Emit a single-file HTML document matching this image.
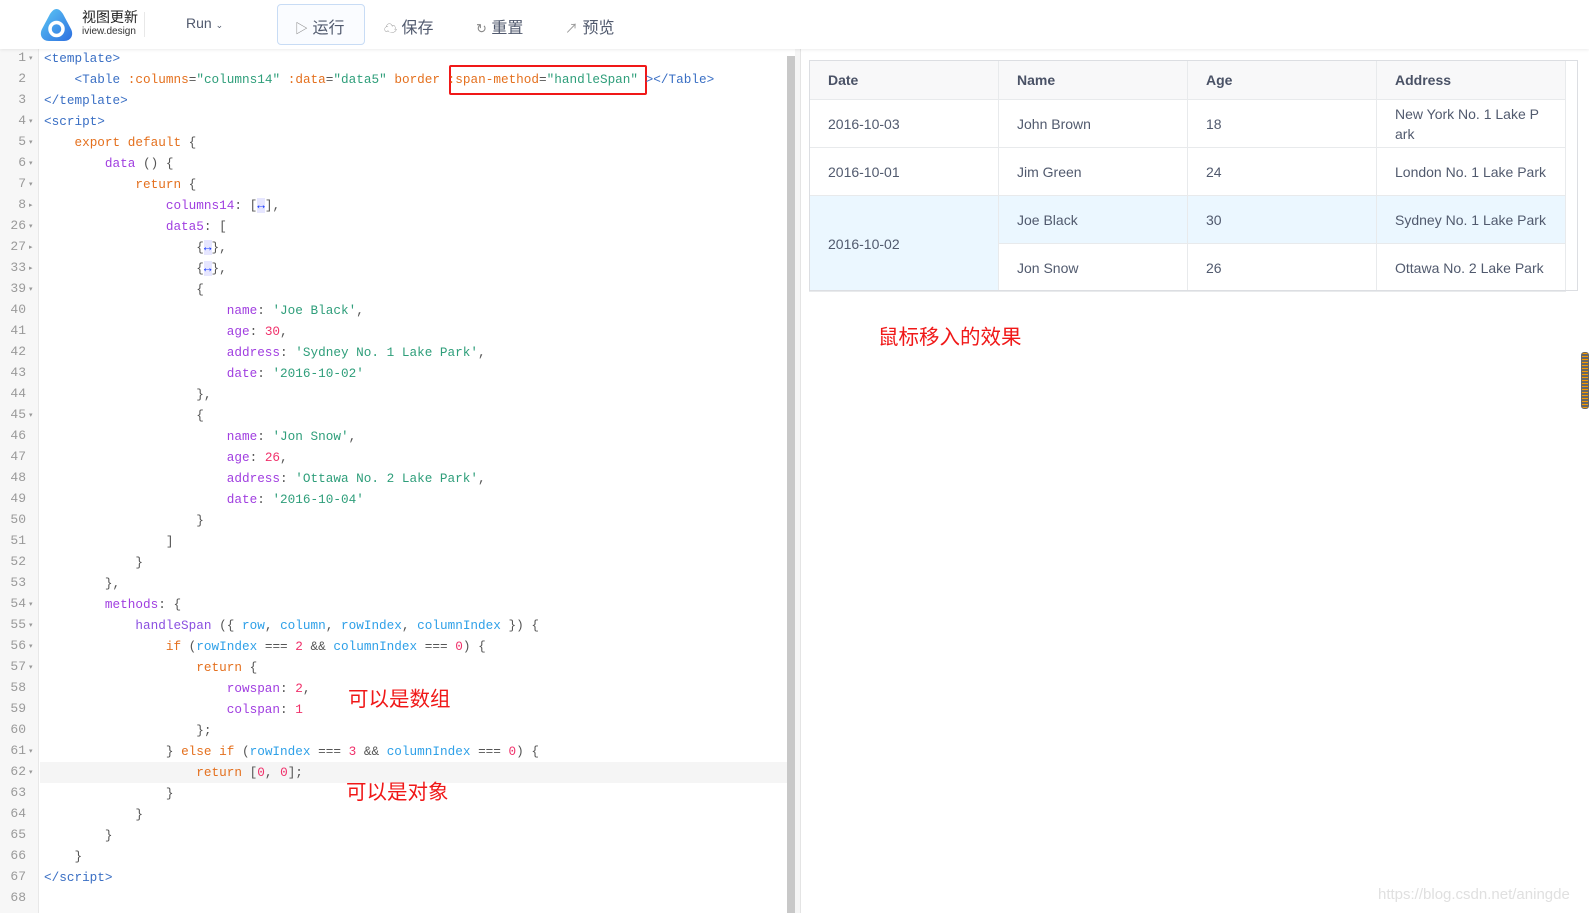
<!DOCTYPE html>
<html><head><meta charset="utf-8"><style>
*{margin:0;padding:0;box-sizing:border-box}
body{width:1589px;height:913px;overflow:hidden;background:#fff;font-family:"Liberation Sans","Noto Sans CJK SC",sans-serif;position:relative}
.top{position:absolute;left:0;top:0;width:1589px;height:49px;background:#fff;box-shadow:0 1px 3px rgba(0,0,0,.08);z-index:2}
.abs{position:absolute}
.btn{position:absolute;top:13px;font-size:16px;color:#515a6e;white-space:nowrap}
.gutter{position:absolute;left:0;top:49px;width:39px;height:864px;background:#f7f7f7;border-right:1px solid #e8e8e8}
.ln{position:absolute;left:0;width:26px;text-align:right;font:13px "Liberation Mono",monospace;color:#9a9a9a}
.ar{position:absolute;left:29px;font-size:7px;color:#999}
.code{position:absolute;left:44px;font:12.7px "Liberation Mono",monospace;color:#555;white-space:pre;line-height:21px}
.t{color:#3a6fc4}.a{color:#e4701e}.s{color:#2e9e7a}.k{color:#e4701e}.p{color:#a03ee0}.n{color:#f0306a}.v{color:#2ea0e8}.f{color:#8a4fe0}
.e{color:#1a3cff;background:#e6e6ff}
table{position:absolute;left:809px;top:60px;border-collapse:collapse;font-size:14px;color:#515a6e;table-layout:fixed;width:756px}
td,th{border:1px solid #e8eaec;width:189px;padding:0 18px;text-align:left;line-height:20px}
th{background:#f8f8f9;height:39px;font-weight:bold;color:#4a5266}
td{height:48px}
.hl{background:#ebf7ff}
.cn{position:absolute;color:#f01818;font-size:20.5px;font-family:"Liberation Sans","Noto Sans CJK SC",sans-serif}
</style></head><body>
<div class="top">
 <svg class="abs" style="left:39px;top:7px" width="35" height="36" viewBox="0 0 35 36"><defs><linearGradient id="lg1" x1="0" y1="0" x2="1" y2="1"><stop offset="0" stop-color="#5cc8f5"/><stop offset="1" stop-color="#2d6fe0"/></linearGradient></defs><path d="M17.5 2C20 2 22 4 24 7L32 22C35 28 32 34 25 34H10C3 34 0 28 3 22L11 7C13 4 15 2 17.5 2Z" fill="url(#lg1)"/><circle cx="17.5" cy="22" r="6.5" fill="none" stroke="#fff" stroke-width="3.5"/></svg>
 <div class="abs" style="left:82px;top:7px;font-size:14px;color:#222">视图更新</div>
 <div class="abs" style="left:82px;top:26px;font-size:10px;color:#333">iview.design</div>
 <div class="abs" style="left:144px;top:12px;width:1px;height:25px;background:#e8e8e8"></div>
 <div class="btn" style="left:186px;top:15px;font-size:14px">Run <span style="font-size:9px">&#8964;</span></div>
 <div class="abs" style="left:277px;top:4px;width:88px;height:41px;border:1px solid #c8dcf5;border-radius:4px;background:#fafcff"></div>
 <div class="btn" style="left:295px;top:14px"><span style="font-size:13px;color:#888">&#9655;</span> 运行</div>
 <div class="btn" style="left:384px;top:14px"><span style="font-size:13px;color:#888">&#9729;</span> 保存</div>
 <div class="btn" style="left:476px;top:14px"><span style="font-size:13px;color:#888">&#8635;</span> 重置</div>
 <div class="btn" style="left:565px;top:14px"><span style="font-size:13px;color:#999">&#8599;</span> 预览</div>
</div>
<div class="gutter"></div>
<div class="abs" style="left:40px;top:762px;width:747px;height:21px;background:#f5f5f5"></div>
<div class="abs" style="left:787px;top:56px;width:8px;height:857px;background:#c8c8c8"></div>
<div class="abs" style="left:795px;top:49px;width:6px;height:864px;background:#f5f5f5;border-right:1px solid #e4e4e4"></div>
<div id="gnums"></div>
<div class="abs" style="left:449px;top:65px;width:198px;height:30px;border:2px solid #f01818;border-radius:2px"></div>
<div class="code" style="top:48px"><span class="t">&lt;template&gt;</span>
    <span class="t">&lt;Table</span> <span class="a">:columns</span>=<span class="s">"columns14"</span> <span class="a">:data</span>=<span class="s">"data5"</span> <span class="a">border</span> <span class="a">:span-method</span>=<span class="s">"handleSpan"</span> <span class="t">&gt;&lt;/Table&gt;</span>
<span class="t">&lt;/template&gt;</span>
<span class="t">&lt;script&gt;</span>
    <span class="k">export default</span> {
        <span class="p">data</span> () {
            <span class="k">return</span> {
                <span class="p">columns14</span>: [<span class="e">&#8596;</span>],
                <span class="p">data5</span>: [
                    {<span class="e">&#8596;</span>},
                    {<span class="e">&#8596;</span>},
                    {
                        <span class="p">name</span>: <span class="s">'Joe Black'</span>,
                        <span class="p">age</span>: <span class="n">30</span>,
                        <span class="p">address</span>: <span class="s">'Sydney No. 1 Lake Park'</span>,
                        <span class="p">date</span>: <span class="s">'2016-10-02'</span>
                    },
                    {
                        <span class="p">name</span>: <span class="s">'Jon Snow'</span>,
                        <span class="p">age</span>: <span class="n">26</span>,
                        <span class="p">address</span>: <span class="s">'Ottawa No. 2 Lake Park'</span>,
                        <span class="p">date</span>: <span class="s">'2016-10-04'</span>
                    }
                ]
            }
        },
        <span class="p">methods</span>: {
            <span class="f">handleSpan</span> ({ <span class="v">row</span>, <span class="v">column</span>, <span class="v">rowIndex</span>, <span class="v">columnIndex</span> }) {
                <span class="k">if</span> (<span class="v">rowIndex</span> === <span class="n">2</span> &amp;&amp; <span class="v">columnIndex</span> === <span class="n">0</span>) {
                    <span class="k">return</span> {
                        <span class="p">rowspan</span>: <span class="n">2</span>,
                        <span class="p">colspan</span>: <span class="n">1</span>
                    };
                } <span class="k">else if</span> (<span class="v">rowIndex</span> === <span class="n">3</span> &amp;&amp; <span class="v">columnIndex</span> === <span class="n">0</span>) {
                    <span class="k">return</span> [<span class="n">0</span>, <span class="n">0</span>];
                }
            }
        }
    }
<span class="t">&lt;/script&gt;</span>
</div>
<script>
var nums=[1,2,3,4,5,6,7,8,26,27,33,39,40,41,42,43,44,45,46,47,48,49,50,51,52,53,54,55,56,57,58,59,60,61,62,63,64,65,66,67,68];
var fold={1:'▾',4:'▾',5:'▾',6:'▾',7:'▾',8:'▸',26:'▾',27:'▸',33:'▸',39:'▾',45:'▾',54:'▾',55:'▾',56:'▾',57:'▾',61:'▾',62:'▾'};
var h='';nums.forEach(function(n,i){var y=48+i*21;h+='<div class="ln" style="top:'+(y+2)+'px">'+n+'</div>';if(fold[n])h+='<div class="ar" style="top:'+(y+6)+'px">'+fold[n]+'</div>';});
document.getElementById('gnums').innerHTML=h;
</script>
<table>
<tr><th>Date</th><th>Name</th><th>Age</th><th>Address</th></tr>
<tr><td>2016-10-03</td><td>John Brown</td><td>18</td><td>New York No. 1 Lake P<br>ark</td></tr>
<tr><td>2016-10-01</td><td>Jim Green</td><td>24</td><td>London No. 1 Lake Park</td></tr>
<tr><td rowspan="2" class="hl" style="height:95px">2016-10-02</td><td class="hl">Joe Black</td><td class="hl">30</td><td class="hl">Sydney No. 1 Lake Park</td></tr>
<tr><td>Jon Snow</td><td>26</td><td>Ottawa No. 2 Lake Park</td></tr>
</table>
<div class="abs" style="left:809px;top:60px;width:769px;height:231px;border:1px solid #dcdee2;pointer-events:none"></div>
<div class="cn" style="left:878px;top:320px">鼠标移入的效果</div>
<div class="cn" style="left:348px;top:682px">可以是数组</div>
<div class="cn" style="left:346px;top:775px">可以是对象</div>
<div class="abs" style="left:1378px;top:886px;font-size:15px;color:#e0e0e0">https://blog.csdn.net/aningde</div>
<div class="abs" style="left:1581px;top:352px;width:8px;height:57px;background:repeating-linear-gradient(#f59a00 0 1px,#666 1px 3px);border-radius:3px;border:1px solid #666"></div>
</body></html>
